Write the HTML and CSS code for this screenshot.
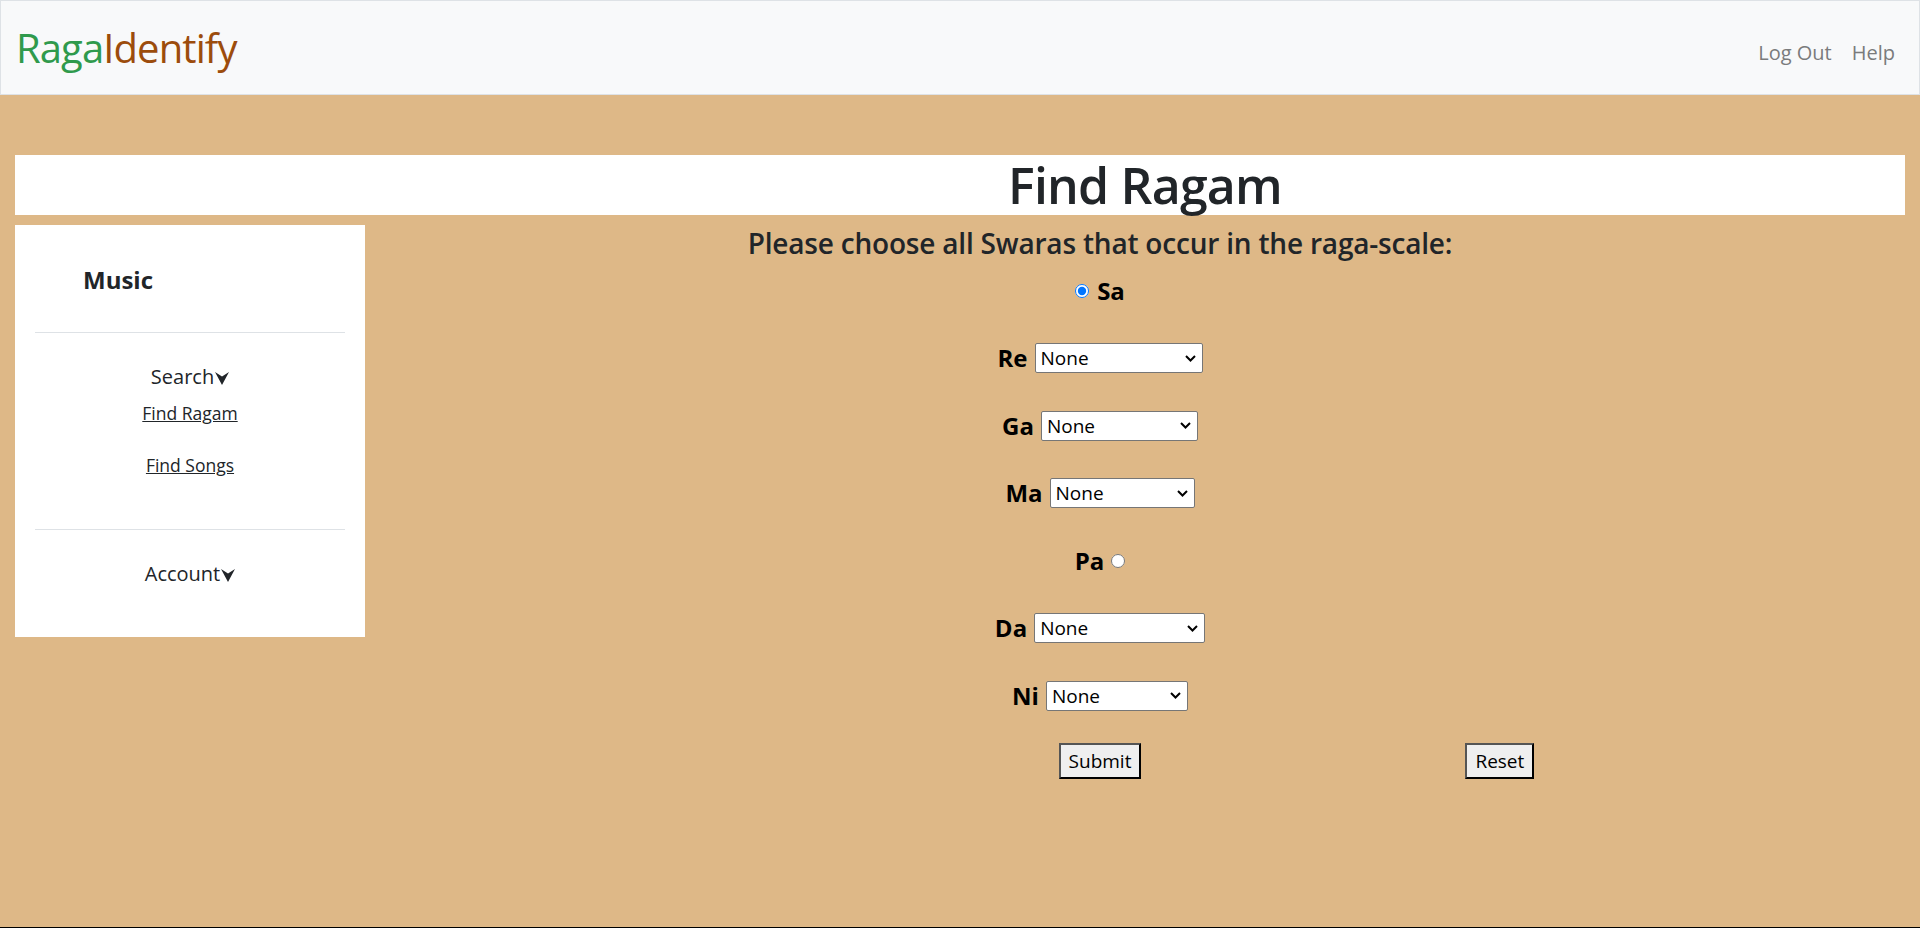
FILE: index.html
```html
<!DOCTYPE html>
<html lang="en">
<head>
<meta charset="utf-8">
<title>RagaIdentify - Find Ragam</title>
<link rel="stylesheet" href="styles.css">
</head>
<body>
<div class="page">
  <nav class="navbar">
    <a class="brand" href="#"><span class="brand-raga">Raga</span><span class="brand-identify">Identify</span></a>
    <ul class="nav-links">
      <li><a class="nav-link" href="#">Log Out</a></li>
      <li><a class="nav-link" href="#">Help</a></li>
    </ul>
  </nav>

  <div class="title-bar"><h1 class="title">Find Ragam</h1></div>

  <div class="layout">
    <aside class="side">
      <div class="side-title">Music</div>
      <hr class="side-rule">
      <div class="side-group">
        <div class="side-toggle">Search<svg class="caret" viewBox="0 0 14 13" width="14" height="13"><polygon points="0,0 7,4.5 14,0 7,13" fill="#212529"/></svg></div>
        <a class="side-link first" href="#">Find Ragam</a>
        <a class="side-link" href="#">Find Songs</a>
      </div>
      <hr class="side-rule lower">
      <div class="side-group">
        <div class="side-toggle account">Account<svg class="caret" viewBox="0 0 14 13" width="14" height="13"><polygon points="0,0 7,4.5 14,0 7,13" fill="#212529"/></svg></div>
      </div>
    </aside>

    <main class="main">
      <h3 class="prompt">Please choose all Swaras that occur in the raga-scale:</h3>
      <form class="swara-form">
        <div class="swara-row">
          <input class="radio" type="radio" checked>
          <span class="swara radio-after">Sa</span>
        </div>
        <div class="swara-row">
          <span class="swara">Re</span>
          <select class="sel sel-re"><option>None</option></select>
        </div>
        <div class="swara-row">
          <span class="swara">Ga</span>
          <select class="sel sel-ga"><option>None</option></select>
        </div>
        <div class="swara-row">
          <span class="swara">Ma</span>
          <select class="sel sel-ma"><option>None</option></select>
        </div>
        <div class="swara-row">
          <span class="swara">Pa</span>
          <input class="radio" type="radio">
        </div>
        <div class="swara-row">
          <span class="swara">Da</span>
          <select class="sel sel-da"><option>None</option></select>
        </div>
        <div class="swara-row">
          <span class="swara">Ni</span>
          <select class="sel sel-ni"><option>None</option></select>
        </div>
        <div class="actions">
          <button class="btn btn-submit" type="button">Submit</button>
          <button class="btn btn-reset" type="button">Reset</button>
        </div>
      </form>
    </main>
  </div>

  <div class="foot"></div>
</div>
</body>
</html>
```

FILE: styles.css
```css
* { box-sizing: border-box; }

html, body {
  margin: 0;
  padding: 0;
}

body {
  background: #deb887;
  font-family: "Open Sans", "Noto Sans", sans-serif;
  color: #212529;
}

.page {
  min-height: 100vh;
  display: flex;
  flex-direction: column;
}

/* ---------- navbar ---------- */
.navbar {
  height: 95px;
  background: #f8f9fa;
  border: 1px solid #dee2e6;
  display: flex;
  align-items: center;
  justify-content: space-between;
  padding: 0 14px 0 15px;
}

.brand {
  font-size: 40px;
  line-height: 60px;
  text-decoration: none;
  letter-spacing: -0.9px;
}

.brand-raga { color: #2f9a4c; }
.brand-identify { color: #9c4c0c; }

.nav-links {
  list-style: none;
  margin: 0;
  padding: 10px 0 0;
  display: flex;
}

.nav-link {
  display: block;
  padding: 0 10px;
  font-size: 20px;
  line-height: 30px;
  color: #7a7b7c;
  text-decoration: none;
}

/* ---------- title ---------- */
.title-bar {
  margin: 60px 15px 0;
  background: #fff;
  height: 60px;
  padding-left: 370px;
  text-align: center;
}

.title {
  margin: 0;
  font-size: 50px;
  line-height: 60px;
  font-weight: 600;
  letter-spacing: -0.8px;
  color: #212529;
}

/* ---------- layout ---------- */
.layout {
  display: flex;
  align-items: flex-start;
  margin: 10px 15px 0;
}

.side {
  width: 350px;
  flex: none;
  background: #fff;
  padding: 20px 20px 20px;
}

.side-title {
  margin: 17px 0 0 48px;
  font-size: 24px;
  line-height: 36px;
  font-weight: 700;
  color: #212529;
}

.side-rule {
  margin: 34px 0 0;
  border: 0;
  border-top: 1px solid #dee2e6;
  height: 0;
}

.side-rule.lower {
  margin-top: 50px;
}

.side-group {
  text-align: center;
}

.side-toggle {
  margin-top: 29px;
  font-size: 20px;
  line-height: 30px;
  color: #212529;
}

.side-toggle.account {
  margin-bottom: 28px;
}

.caret {
  margin-left: 1px;
  vertical-align: -1px;
}

.side-link {
  display: block;
  width: max-content;
  margin: 25px auto 0;
  font-size: 17.5px;
  line-height: 27px;
  color: #212529;
  text-decoration: underline;
}

.side-link.first {
  margin-top: 8px;
}

/* ---------- main form ---------- */
.main {
  flex: 1;
  padding-right: 70px;
  text-align: center;
}

.prompt {
  margin: 2px 0 0;
  font-size: 28px;
  line-height: 1.2;
  font-weight: 600;
  letter-spacing: -0.2px;
  color: #212529;
}

.swara-form {
  margin-top: 12px;
  display: flex;
  flex-direction: column;
  gap: 31.5px;
}

.swara-row {
  height: 36px;
  display: flex;
  justify-content: center;
  align-items: center;
  gap: 7px;
}

.swara {
  font-size: 24px;
  line-height: 36px;
  font-weight: 700;
  color: #000;
}

.radio {
  margin: 0;
  width: 14px;
  height: 14px;
}

.radio-after {
  margin-left: 1px;
}

.sel {
  appearance: none;
  -webkit-appearance: none;
  height: 30px;
  border: 1px solid #767676;
  border-radius: 2px;
  background-color: #fff;
  background-image: url("data:image/svg+xml;utf8,<svg xmlns='http://www.w3.org/2000/svg' width='11' height='7' viewBox='0 0 11 7'><path d='M1 1 L5.5 5.5 L10 1' fill='none' stroke='%23000' stroke-width='2'/></svg>");
  background-repeat: no-repeat;
  background-position: right 6px center;
  padding: 0 24px 0 5px;
  font-family: "Open Sans", "Noto Sans", sans-serif;
  font-size: 19px;
  color: #000;
}

.sel-re { width: 168px; }
.sel-ga { width: 157px; }
.sel-ma { width: 145px; }
.sel-da { width: 171px; }
.sel-ni { width: 142px; }

.actions {
  margin-top: -2.5px;
  display: grid;
  grid-template-columns: 1fr auto 1fr;
  align-items: center;
}

.btn {
  height: 36px;
  padding: 0 8px;
  border: 2px solid;
  border-color: #555 #000 #000 #555;
  border-radius: 0;
  background: #efefef;
  color: #000;
  font-family: "Open Sans", "Noto Sans", sans-serif;
  font-size: 19px;
  line-height: 30px;
}

.btn-submit {
  grid-column: 2;
}

.btn-reset {
  grid-column: 3;
  justify-self: start;
  margin-left: 324px;
}

/* ---------- foot ---------- */
.foot {
  margin-top: auto;
  height: 1px;
  background: #000;
}
```
